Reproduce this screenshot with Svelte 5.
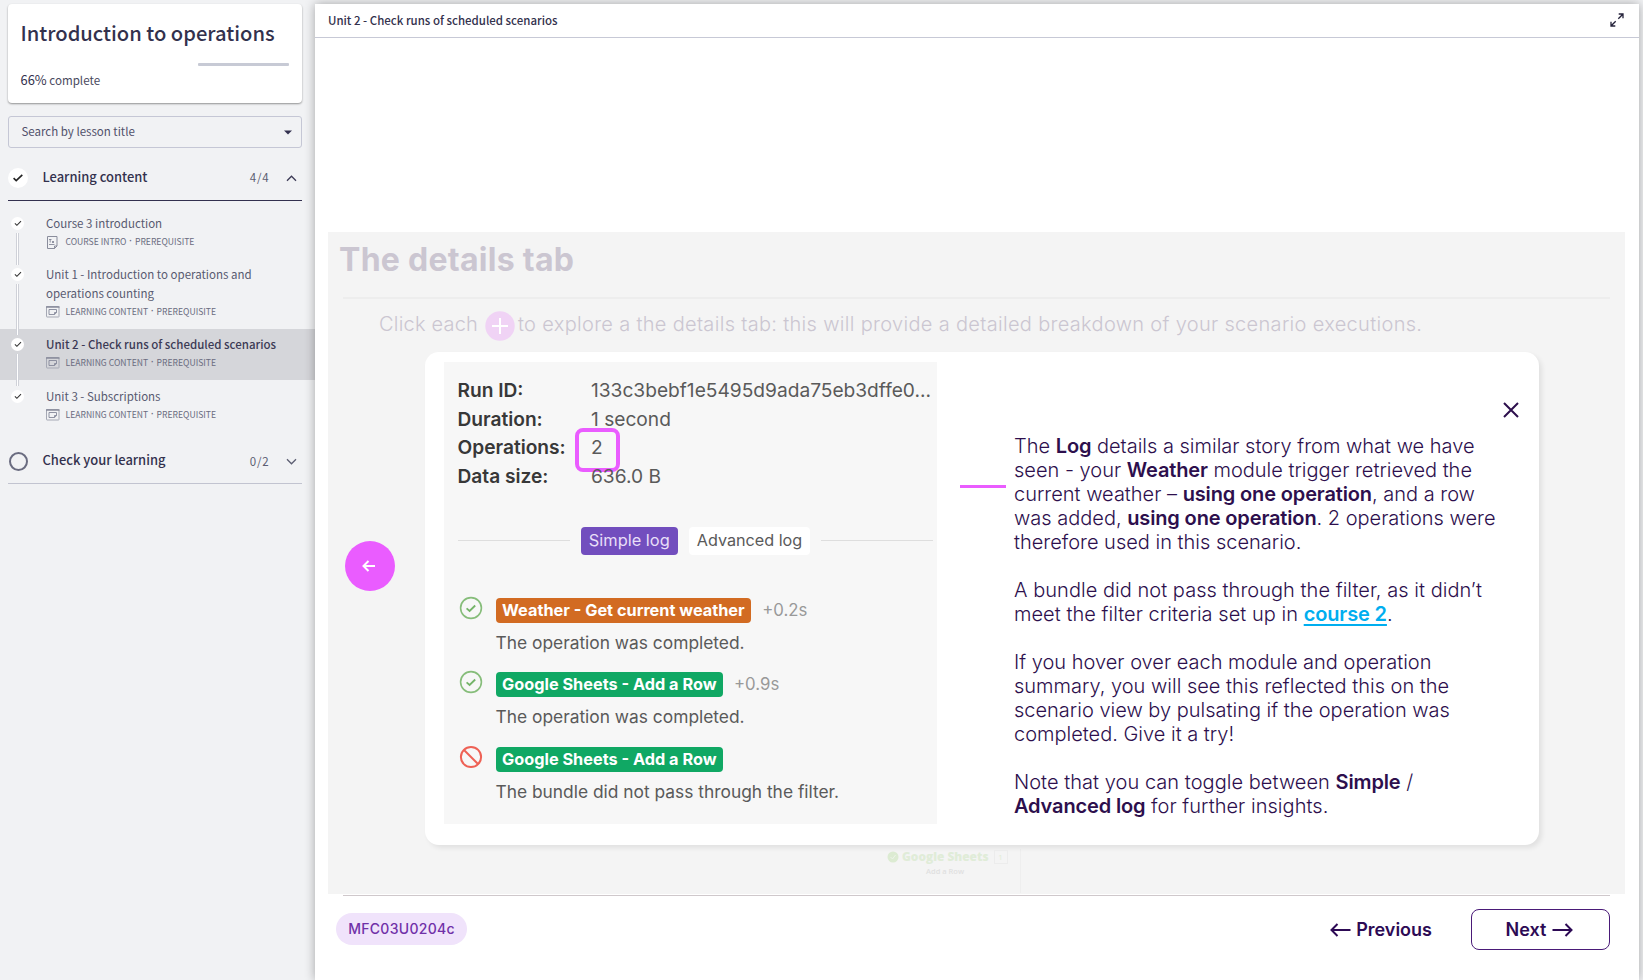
<script>
  const lessons = [
    { title: ['Course 3 introduction'], kind: 'COURSE INTRO', icon: 'doc' },
    { title: ['Unit 1 - Introduction to operations and', 'operations counting'], kind: 'LEARNING CONTENT', icon: 'win' },
    { title: ['Unit 2 - Check runs of scheduled scenarios'], kind: 'LEARNING CONTENT', icon: 'win', active: true },
    { title: ['Unit 3 - Subscriptions'], kind: 'LEARNING CONTENT', icon: 'win' }
  ];
  const facts = [
    ['Run ID:', '133c3bebf1e5495d9ada75eb3dffe0...'],
    ['Duration:', '1 second'],
    ['Operations:', '2'],
    ['Data size:', '636.0 B']
  ];
  const logs = [
    { tag: 'Weather - Get current weather', color: 'orange', time: '+0.2s', text: 'The operation was completed.', ok: true },
    { tag: 'Google Sheets - Add a Row', color: 'green', time: '+0.9s', text: 'The operation was completed.', ok: true },
    { tag: 'Google Sheets - Add a Row', color: 'green', time: '', text: 'The bundle did not pass through the filter.', ok: false }
  ];
</script>

<div class="app">
  <aside>
    <div class="card">
      <h1>Introduction to operations</h1>
      <div class="progress"><i></i></div>
      <p><b>66%</b> complete</p>
    </div>
    <div class="search"><span>Search by lesson title</span>
      <svg width="8" height="5" viewBox="0 0 8 5"><path d="M0 .5h8L4 4.5z" fill="#33304f" /></svg>
    </div>
    <div class="section open">
      <span class="dot big"><svg width="12" height="10" viewBox="0 0 12 10"><path d="M1.6 5.2l2.600 2.400L10.300 1.800" fill="none" stroke="#222" stroke-width="1.600" /></svg></span>
      <span class="name">Learning content</span><span class="count">4/4</span>
      <svg width="11" height="7" viewBox="0 0 11 7"><path d="M1 5.8l4.5-4.6L10 5.8" fill="none" stroke="#3c3a55" stroke-width="1.3" /></svg>
    </div>
    <div class="lessons">
      {#each lessons as l, i}
        <div class="lesson" class:active={l.active}>
          <div class="rail">
            <span class="dot"><svg width="8" height="7" viewBox="0 0 8 7"><path d="M.9 3.4l2 1.9L7 1.2" fill="none" stroke="#333" stroke-width="1.1" /></svg></span>
            {#if i < lessons.length - 1}<i class="link"></i>{/if}
          </div>
          <div class="info">
            {#each l.title as t}<div class="lt">{t}</div>{/each}
            <div class="meta">
              <span class="ic">
                {#if l.icon === 'doc'}
                  <svg width="13" height="14" viewBox="0 0 13 14" fill="none" stroke="#8a8d9c"><path d="M1.500 .5h9.500v9.500l-2.500 2.500h-7z" /><path d="M3 3.500h2.500M4.200 3.500v3M6 5l2 2M8 5L6 7M3 8.500h5.500M11 10H8.500v2.500" stroke="#777a8d" stroke-width=".8" /></svg>
                {:else}
                  <svg width="14" height="12" viewBox="0 0 14 12" fill="none" stroke="#a5a8b4"><rect x=".5" y=".5" width="12.500" height="10.500" rx=".5" /><path d="M0 1h13.500" stroke="#888b9b" stroke-width="1.500" /><path d="M3 3.500h7.500v3.200L8.500 8.500H3zM10.500 6.500H8.500v2" stroke="#85889a" stroke-width=".9" /></svg>
                {/if}
              </span>
              <span>{l.kind}</span><span class="sep">·</span><span>PREREQUISITE</span>
            </div>
          </div>
        </div>
      {/each}
    </div>
    <div class="section">
      <span class="ring"></span>
      <span class="name">Check your learning</span><span class="count">0/2</span>
      <svg width="11" height="7" viewBox="0 0 11 7"><path d="M1 1.200l4.500 4.600L10 1.200" fill="none" stroke="#5c5e72" stroke-width="1.300" /></svg>
    </div>
  </aside>

  <main>
    <header>
      <span>Unit 2 - Check runs of scheduled scenarios</span>
      <svg width="14" height="14" viewBox="0 0 14 14" fill="none" stroke="#24223a" stroke-width="1.300"><path d="M8.300 5.700l4.500-4.500M8.700 1h4.300v4.300M5.700 8.300L1.200 12.800M1 8.700V13h4.300" /></svg>
    </header>

    <section class="slide">
      <h2>The details tab</h2>
      <div class="rule"></div>
      <div class="hint">
        <span class="h1">Click each</span>
        <svg width="30" height="30" viewBox="0 0 30 30"><circle cx="15" cy="15" r="14.700" fill="#f0d3f5" /><path d="M15 7v16M7 15h16" stroke="#fff" stroke-width="2" /></svg>
        <span class="h2">to explore a the details tab: this will provide a detailed breakdown of your scenario executions.</span>
      </div>
      <div class="stage">
        <button class="back" aria-label="Back"><svg width="14" height="12" viewBox="0 0 14 12" fill="none" stroke="#fff" stroke-width="2"><path d="M13 6H1.500M6.500 1L1.500 6l5 5" /></svg></button>
        <div class="popup">
          <div class="shot">
            <dl>
              {#each facts as f}
                <dt>{f[0]}</dt><dd>{f[1]}{#if f[1] === '2'}<i class="mark"></i>{/if}</dd>
              {/each}
            </dl>
            <div class="tabs"><i></i><span class="tab on">Simple log</span><span class="tab">Advanced log</span><i></i></div>
            {#each logs as g}
              <div class="log">
                <svg width="24" height="24" viewBox="0 0 24 24" fill="none" stroke-width="1.600">
                  {#if g.ok}
                    <circle cx="12" cy="12" r="10.400" stroke="#86bd7a" /><path d="M7.600 12.300l3 2.700 5.600-5.500" stroke="#74b468" stroke-width="1.800" />
                  {:else}
                    <circle cx="12" cy="12" r="10.100" stroke="#ee6155" stroke-width="2" /><path d="M5 5l14 14" stroke="#ee6155" stroke-width="2" />
                  {/if}
                </svg>
                <div>
                  <div class="line"><span class="tag {g.color}">{g.tag}</span><span class="time">{g.time}</span></div>
                  <div class="msg">{g.text}</div>
                </div>
              </div>
            {/each}
          </div>
          <i class="dash"></i>
          <div class="copy">
            <svg class="close" width="16" height="16" viewBox="0 0 16 16"><path d="M1 1l14 14M15 1L1 15" stroke="#2d0f4d" stroke-width="2" /></svg>
            <p>The <b>Log</b> details a similar story from what we have<br />seen - your <b>Weather</b> module trigger retrieved the<br />current weather – <b>using one operation</b>, and a row<br />was added, <b>using one operation</b>. 2 operations were<br />therefore used in this scenario.</p>
            <p class="wide">A bundle did not pass through the filter, as it didn’t<br />meet the filter criteria set up in <a href="#course">course 2</a>.</p>
            <p>If you hover over each module and operation<br />summary, you will see this reflected this on the<br />scenario view by pulsating if the operation was<br />completed. Give it a try!</p>
            <p class="wide">Note that you can toggle between <b>Simple</b> /<br /><b>Advanced log</b> for further insights.</p>
          </div>
        </div>
      </div>
      <div class="ghost">
        <div class="gs"><svg width="12" height="12" viewBox="0 0 12 12"><circle cx="6" cy="6" r="5.500" fill="#dcebd2" /><path d="M3.500 6l2 2 3-4" fill="none" stroke="#eef4ea" /></svg><b>Google Sheets</b><span>1</span></div>
        <small>Add a Row</small>
      </div>
    </section>

    <footer>
      <span class="code">MFC03U0204c</span>
      <span class="prev"><svg width="21" height="14" viewBox="0 0 21 14" fill="none" stroke="#2d0a55" stroke-width="2"><path d="M20.500 7H1.500M7.500 1l-6 6 6 6" /></svg>Previous</span>
      <span class="next">Next<svg width="21" height="14" viewBox="0 0 21 14" fill="none" stroke="#2d0a55" stroke-width="2"><path d="M.5 7h19M13.500 1l6 6-6 6" /></svg></span>
    </footer>
  </main>
</div>

<style>
  :global(body) { margin: 0; }
  * { box-sizing: border-box; }
  svg { display: block; flex: none; }
  i { font-style: normal; }
  h1, h2, p, dl, dt, dd { margin: 0; }
  .app { width: 1643px; height: 980px; overflow: hidden; display: flex; background: #f1f2f4; font-family: "Noto Sans CJK SC", "Noto Sans", sans-serif; color: #33314d; white-space: nowrap; }
  aside { width: 315px; flex: none; padding-top: 4px; }
  .card { width: 294px; height: 99px; margin-left: 8px; padding: 15px 13px 0 12.500px; background: #fff; border-radius: 4px; box-shadow: 0 1px 2px rgba(0, 0, 0, .4); }
  h1 { font-size: 20.150px; line-height: 28px; font-weight: 500; }
  .progress { height: 3px; margin-top: 16px; display: flex; justify-content: flex-end; }
  .progress i { width: 91px; background: #c7cad5; border-radius: 1px; }
  .card p { margin-top: 4px; font-size: 11.600px; line-height: 20px; color: #4a4a60; }
  .card b { font-weight: 400; font-size: 12.900px; color: #33314d; }
  .search { margin: 13px 0 0 8px; width: 294px; height: 32px; border: 1px solid #c5c7d5; border-radius: 3px; display: flex; align-items: center; justify-content: space-between; padding: 0 9px 0 12.500px; font-size: 11.500px; line-height: 20px; color: #50506a; }
  .search span { padding-bottom: 2px; }
  .section { width: 294px; height: 52px; margin-left: 8px; padding: 8px 5px 0 0; display: flex; align-items: center; border-bottom: 1px solid #c2c4d0; }
  .section.open { height: 53px; border-bottom: 1px solid #33304f; }
  .dot { width: 13px; height: 13px; border-radius: 50%; background: #fff; display: flex; align-items: center; justify-content: center; }
  .dot.big { width: 20px; height: 20px; }
  .ring { width: 19px; height: 19px; margin: 0 0 0 1px; border: 2px solid #6a6c80; border-radius: 50%; }
  .name { margin-left: 14.500px; flex: 1; font-size: 12.950px; font-weight: 500; line-height: 20px; padding-bottom: 3px; }
  .count { font-size: 11.500px; letter-spacing: .8px; color: #5c5e72; margin-right: 16.500px; padding-bottom: 2px; }
  .lessons { padding-top: 7px; }
  .lesson { display: flex; }
  .lesson.active { background: #d5d6da; margin-bottom: 1px; }
  .rail { width: 34px; margin-right: 12px; padding: 9px 0 0 1px; display: flex; flex-direction: column; align-items: center; position: relative; z-index: 1; }
  .link { width: 3px; flex: 1; margin: 3px 0 -6px; background: #fff; border: solid #cfd1d8; border-width: 0 1px; }
  .info { padding: 6px 0 5px; }
  .lt { font-size: 11.500px; line-height: 19px; color: #585a70; }
  .active .lt { font-weight: 500; color: #3c3a55; }
  .meta { margin-top: 0; height: 21px; line-height: 16px; display: flex; font-size: 8.600px; color: #6a6c80; }
  .ic { width: 19.500px; padding-top: 3px; }
  .sep { width: 8.500px; text-align: center; font-family: "Liberation Sans", sans-serif; font-weight: 700; }

  main { width: 1324px; height: 976px; margin-top: 4px; background: #fff; box-shadow: 0 0 10px rgba(0, 0, 0, .32); position: relative; }
  header { height: 34px; border-bottom: 1px solid #c7c9d6; padding: 0 15px 2px 13px; display: flex; justify-content: space-between; align-items: center; font-size: 11.480px; font-weight: 500; }
  .slide { margin: 194px 0 0 13px; width: 1297px; height: 662px; padding-top: 9px; background: #f4f4f4; font-family: Inter, sans-serif; color: #cbc6d1; position: relative; }
  h2 { font-size: 32px; line-height: 38px; padding-left: 11px; font-weight: 700; letter-spacing: .28px; }
  .rule { height: 2px; margin: 18px 15px 0; background: #ededed; }
  .hint { height: 53px; display: flex; align-items: center; padding-left: 51px; font-size: 20px; font-weight: 300; letter-spacing: .32px; }
  .hint span { padding-bottom: 3px; }
  .hint .h1 { width: 106px; letter-spacing: .2px; }
  .hint .h2 { margin-left: 3px; }
  .stage { display: flex; align-items: flex-start; }
  .back { margin: 189px 30px 0 17px; width: 50px; height: 50px; border: 0; padding: 0 3px 0 0; border-radius: 50%; background: #ea5cff; display: flex; align-items: center; justify-content: center; }
  .popup { width: 1114px; height: 493px; background: #fff; border-radius: 14px; box-shadow: 3px 3px 5px rgba(0, 0, 0, .08); display: flex; align-items: flex-start; }
  .shot { width: 493px; height: 462px; margin: 10px 0 0 19px; background: #f7f7f7; padding: 14px 4px 0 13.500px; color: #5a5a5a; }
  dl { display: grid; grid-template-columns: 133.500px 1fr; font-size: 19.150px; line-height: 28.500px; }
  dt { font-weight: 600; color: #383838; }
  dd { position: relative; }
  .mark { position: absolute; left: -16px; top: -5px; width: 45px; height: 44px; border: 4px solid #ea5cff; border-radius: 8px; }
  .tabs { display: flex; align-items: center; margin-top: 36.700px; }
  .tabs i { flex: 1; height: 1px; background: #dedede; }
  .tab { height: 28px; line-height: 27px; width: 121px; text-align: center; background: #fff; border-radius: 4px; font-size: 16.200px; margin-right: 11px; }
  .tab.on { background: #724ebe; color: #e8dff8; width: 97.500px; margin-left: 11px; font-size: 16.400px; }
  .log { display: flex; height: 74.300px; }
  .tabs + .log { margin-top: 41.300px; }
  .log > svg { margin: 0 13px 0 1px; }
  .line { display: flex; height: 25px; margin-top: 2px; line-height: 25px; }
  .tag { padding: 0 6.500px; border-radius: 4px; color: #fff; font-weight: 700; font-size: 16.300px; }
  .orange { background: #d26b22; }
  .green { background: #10a864; }
  .time { margin-left: 11px; font-size: 16.800px; color: #999; }
  .msg { font-size: 17.380px; line-height: 24px; margin-top: 8px; }
  .dash { width: 46px; height: 3px; margin: 133px 8px 0 23px; background: #ea5cff; }
  .copy { width: 505px; padding-top: 50px; font-size: 20px; line-height: 24px; font-weight: 300; color: #2d0f4d; }
  .copy b, .copy a { font-weight: 600; letter-spacing: -.14px; }
  .copy a { color: #00aeef; text-decoration: underline; text-underline-offset: 3px; text-decoration-thickness: 2px; }
  .copy p { margin-bottom: 24px; }
  .copy .wide { letter-spacing: .04px; }
  .close { margin: 0 0 16px 488.500px; }
  .ghost { margin-top: 4px; width: 136px; margin-left: 557px; height: 44px; border-right: 1px solid #eee; color: #e0e0e0; }
  .gs { display: flex; align-items: center; gap: 3px; height: 15px; margin-left: 2px; font: 700 11.900px/15px "Open Sans", sans-serif; color: #e0ecd8; }
  .gs span { width: 14px; height: 14px; line-height: 12px; text-align: center; border: 1px solid #ececec; font-size: 8px; font-weight: 400; margin-left: 2px; }
  small { display: block; font: 600 7.500px/14px "Open Sans", sans-serif; padding-left: 41px; }

  footer { margin: 1px 29px 0 28px; border-top: 1px solid #cfc8cb; height: 85px; padding-top: 13px; display: flex; font-family: Inter, sans-serif; color: #2d0a55; }
  .code { width: 131px; height: 32px; margin: 4px 0 0 -7px; border-radius: 16px; background: #f0e3fb; color: #7030a8; font-size: 14px; font-weight: 500; line-height: 32px; text-align: center; letter-spacing: .3px; }
  .prev { margin-left: auto; height: 41px; display: flex; align-items: center; gap: 5px; font-size: 18px; font-weight: 600; margin-right: 39px; }
  .next { width: 139px; height: 41px; border: 1.500px solid #4a1a78; border-radius: 8px; display: flex; align-items: center; justify-content: center; gap: 6px; padding-right: 2px; font-size: 18px; font-weight: 600; }
</style>
